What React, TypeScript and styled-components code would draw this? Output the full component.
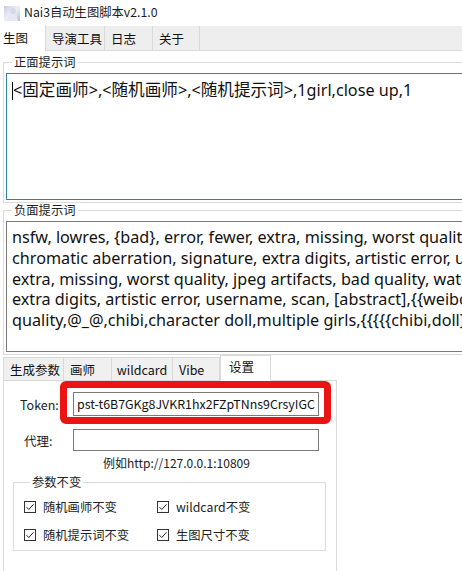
import React from "react";
import styled, { createGlobalStyle } from "styled-components";

const GlobalStyle = createGlobalStyle`
  html, body { margin: 0; padding: 0; background: #ffffff; }
  body {
    font-family: "Noto Sans CJK SC", "Noto Sans", sans-serif;
    color: #111;
  }
`;

const Window = styled.div`
  width: 462px;
  height: 571px;
  overflow: hidden;
  background: #ffffff;
  display: flex;
  flex-direction: column;
`;

const TitleBar = styled.div`
  height: 26px;
  display: flex;
  align-items: center;
  gap: 4px;
  padding-left: 4px;
  font-size: 12.3px;
  color: #1a1a1a;
  flex-shrink: 0;
`;

const TitleText = styled.span`
  line-height: 1;
  margin-top: -1px;
`;

const TabStrip = styled.div`
  display: flex;
  align-items: flex-end;
  height: 25px;
  background: #eeeeee;
  border-bottom: 1px solid #d9d9d9;
  flex-shrink: 0;
  box-sizing: border-box;
`;

const TopTab = styled.div<{ $active?: boolean; $w: number }>`
  width: ${(p) => p.$w}px;
  height: ${(p) => (p.$active ? 26 : 24)}px;
  margin-bottom: ${(p) => (p.$active ? -1 : 0)}px;
  box-sizing: border-box;
  background: ${(p) => (p.$active ? "#ffffff" : "#eeeeee")};
  border-right: 1px solid #d9d9d9;
  display: flex;
  align-items: center;
  padding-left: ${(p) => (p.$active ? 3 : 6)}px;
  padding-bottom: ${(p) => (p.$active ? 2 : 0)}px;
  font-size: 12.5px;
  color: #111;
  flex-shrink: 0;
`;

const Content = styled.div`
  display: flex;
  flex-direction: column;
  padding: 4px 0 0 3px;
  width: 480px;
`;

const Group = styled.fieldset<{ $pb?: number }>`
  margin: 0;
  padding: 4px 0 ${(p) => p.$pb ?? 2}px 2px;
  border: 1px solid #dcdcdc;
  border-right: none;
  min-width: 0;
`;

const Legend = styled.legend`
  font-size: 12.3px;
  line-height: 14px;
  padding: 0 2px;
  margin-left: 6px;
  color: #222;
`;

const TextBox = styled.div<{ $focus?: boolean; $h: number; $lh: number }>`
  height: ${(p) => p.$h}px;
  box-sizing: border-box;
  border: 1px solid ${(p) => (p.$focus ? "#2f84ad" : "#7a7a7a")};
  border-right: none;
  background: #fff;
  padding: 5px 0 0 5px;
  font-family: "Noto Sans", "Noto Sans CJK SC", sans-serif;
  font-size: 16.2px;
  line-height: ${(p) => p.$lh}px;
  color: #111;
  overflow: hidden;
`;

const Line = styled.div`
  white-space: pre;
`;

const Cjk = styled.span`
  font-family: "Noto Sans CJK SC", sans-serif;
  font-size: 16.6px;
`;

const Caret = styled.span`
  display: inline-block;
  width: 1px;
  height: 18px;
  background: #000;
  vertical-align: -4px;
`;

const LowerArea = styled.div`
  display: flex;
  flex-direction: column;
`;

const LowerStrip = styled.div`
  display: flex;
  align-items: flex-end;
  height: 25px;
`;

const LowerTab = styled.div<{ $active?: boolean; $first?: boolean; $center?: boolean; $w: number }>`
  width: ${(p) => p.$w}px;
  height: ${(p) => (p.$active ? 26 : 24)}px;
  margin-bottom: -1px;
  box-sizing: border-box;
  background: ${(p) => (p.$active ? "#ffffff" : "#f0f0f0")};
  border: 1px solid #d9d9d9;
  border-bottom: 1px solid ${(p) => (p.$active ? "#ffffff" : "#d9d9d9")};
  border-left: ${(p) => (p.$first || p.$active ? "1px solid #d9d9d9" : "none")};
  display: flex;
  align-items: center;
  justify-content: ${(p) => (p.$center ? "center" : "flex-start")};
  padding-left: ${(p) => (p.$center ? 0 : p.$active ? 8 : 6)}px;
  padding-bottom: ${(p) => (p.$active ? 3 : 0)}px;
  font-size: 12.5px;
  color: #111;
  position: relative;
  z-index: ${(p) => (p.$active ? 2 : 1)};
`;

const Panel = styled.div`
  position: relative;
  width: 334px;
  height: 200px;
  box-sizing: border-box;
  border: 1px solid #d9d9d9;
  border-bottom: none;
  background: #fff;
  padding: 11px 0 0 0;
`;

const FormRow = styled.div<{ $mt?: number }>`
  display: flex;
  align-items: center;
  margin-top: ${(p) => p.$mt ?? 0}px;
`;

const Label = styled.div<{ $pl: number }>`
  width: 69px;
  box-sizing: border-box;
  padding-left: ${(p) => p.$pl}px;
  font-size: 12.5px;
  color: #222;
`;

const Input = styled.div<{ $h: number }>`
  width: 246px;
  height: ${(p) => p.$h}px;
  box-sizing: border-box;
  border: 1px solid #7a7a7a;
  background: #fff;
  font-size: 12.4px;
  display: flex;
  align-items: center;
  padding-left: 3px;
  white-space: nowrap;
  overflow: hidden;
  color: #111;
`;

const Hint = styled.div`
  margin: 3px 0 0 99px;
  font-size: 12px;
  color: #222;
  line-height: 18px;
`;

const Annotation = styled.div`
  position: absolute;
  left: 56px;
  top: 0px;
  width: 271px;
  height: 43px;
  box-sizing: border-box;
  border: 7px solid #ec1313;
  border-radius: 6px;
  pointer-events: none;
`;

const ParamGroup = styled.fieldset`
  margin: 3px 0 0 9px;
  width: 313px;
  height: 76px;
  box-sizing: border-box;
  border: 1px solid #dcdcdc;
  padding: 9px 0 0 10px;
  display: grid;
  grid-template-columns: 133px auto;
  row-gap: 10px;
  align-content: start;
`;

const CheckRow = styled.div`
  display: flex;
  align-items: center;
  gap: 7px;
  font-size: 12.3px;
  color: #222;
  height: 18px;
`;

const Box = styled.span`
  width: 12px;
  height: 12px;
  display: inline-flex;
`;

const Check = () => (
  <Box>
    <svg width="12" height="12" viewBox="0 0 12 12">
      <rect x="0.5" y="0.5" width="11" height="11" fill="#fff" stroke="#333" />
      <path d="M2.5 6.2 L4.8 8.5 L9.5 3.3" fill="none" stroke="#222" strokeWidth="1" />
    </svg>
  </Box>
);

const AppIcon = () => (
  <svg width="16" height="15" viewBox="0 0 16 15">
    <defs>
      <linearGradient id="ig" x1="0" y1="0" x2="1" y2="1">
        <stop offset="0" stopColor="#c9cde3" />
        <stop offset="0.5" stopColor="#eef0f8" />
        <stop offset="1" stopColor="#b8bdd6" />
      </linearGradient>
    </defs>
    <rect x="0" y="0" width="16" height="15" fill="url(#ig)" />
    <path d="M3 15 C4 9 6 6 9 5 C12 6 13 10 14 15 Z" fill="#e4e6f2" />
    <circle cx="9" cy="5" r="3" fill="#d6d9ea" />
  </svg>
);

const negLines = [
  "nsfw, lowres, {bad}, error, fewer, extra, missing, worst quality, jpeg artifacts,",
  "chromatic aberration, signature, extra digits, artistic error, username,",
  "extra, missing, worst quality, jpeg artifacts, bad quality, watermark,",
  "extra digits, artistic error, username, scan, [abstract],{{weibo watermark}}",
  "quality,@_@,chibi,character doll,multiple girls,{{{{{chibi,doll}}}}}",
];

export default function App() {
  return (
    <Window>
      <GlobalStyle />
      <TitleBar>
        <AppIcon />
        <TitleText>Nai3自动生图脚本v2.1.0</TitleText>
      </TitleBar>
      <TabStrip>
        <TopTab $active $w={46}>生图</TopTab>
        <TopTab $w={59}>导演工具</TopTab>
        <TopTab $w={48}>日志</TopTab>
        <TopTab $w={47}>关于</TopTab>
      </TabStrip>
      <Content>
        <Group $pb={2}>
          <Legend>正面提示词</Legend>
          <TextBox $focus $h={127} $lh={20}>
            <Line>
              <Caret />
              {"<"}<Cjk>固定画师</Cjk>{">,<"}<Cjk>随机画师</Cjk>{">,<"}<Cjk>随机提示词</Cjk>{">,1girl,close up,1"}
            </Line>
          </TextBox>
        </Group>
        <Group $pb={2}>
          <Legend>负面提示词</Legend>
          <TextBox $h={131} $lh={20.75}>
            {negLines.map((l) => (
              <Line key={l}>{l}</Line>
            ))}
          </TextBox>
        </Group>
        <LowerArea>
          <LowerStrip>
            <LowerTab $first $w={61}>生成参数</LowerTab>
            <LowerTab $w={48}>画师</LowerTab>
            <LowerTab $w={61} $center>wildcard</LowerTab>
            <LowerTab $w={47}>Vibe</LowerTab>
            <LowerTab $active $w={51}>设置</LowerTab>
          </LowerStrip>
          <Panel>
            <Annotation />
            <FormRow>
              <Label $pl={16}>Token:</Label>
              <Input $h={24}>pst-t6B7GKg8JVKR1hx2FZpTNns9CrsyIGC</Input>
            </FormRow>
            <FormRow $mt={13}>
              <Label $pl={20}>代理:</Label>
              <Input $h={22} />
            </FormRow>
            <Hint>例如http://127.0.0.1:10809</Hint>
            <ParamGroup>
              <Legend>参数不变</Legend>
              <CheckRow><Check />随机画师不变</CheckRow>
              <CheckRow><Check />wildcard不变</CheckRow>
              <CheckRow><Check />随机提示词不变</CheckRow>
              <CheckRow><Check />生图尺寸不变</CheckRow>
            </ParamGroup>
          </Panel>
        </LowerArea>
      </Content>
    </Window>
  );
}
